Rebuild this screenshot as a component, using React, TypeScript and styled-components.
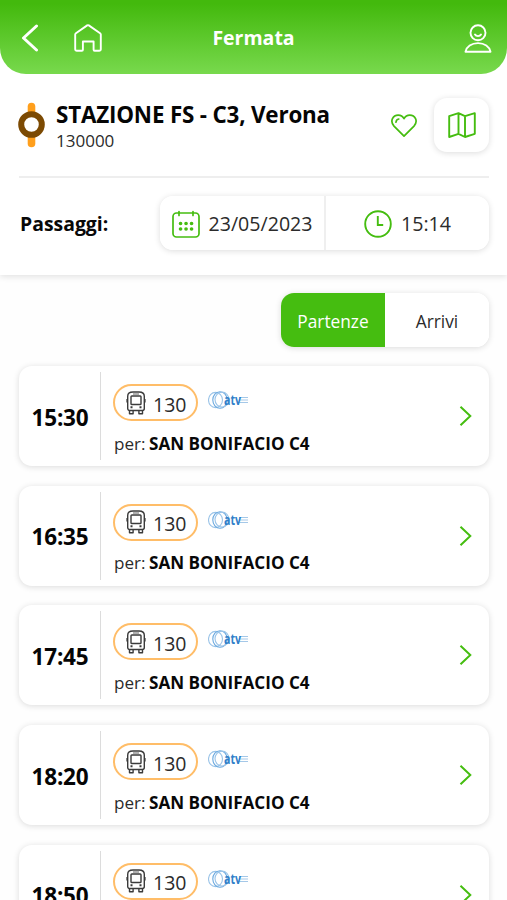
import React from 'react';
import styled, { createGlobalStyle } from 'styled-components';

const GREEN = '#45bd10';

const GlobalStyle = createGlobalStyle`
  * { box-sizing: border-box; }
  html, body { margin: 0; height: 100%; overflow: hidden; background: #fefefe; }
  body { font-family: 'Open Sans', 'Noto Sans', sans-serif; color: #2b2b2b; }
  button { font: inherit; color: inherit; border: 0; padding: 0; background: none; }
  svg { display: block; flex: none; }
`;

const Screen = styled.div`
  width: 100%;
  height: 900px;
  overflow: hidden;
`;

const Top = styled.div`
  height: 275px;
  background: #fff;
  box-shadow: 0 2px 6px rgba(0, 0, 0, 0.11);
`;

const Header = styled.header`
  height: 74px;
  display: grid;
  grid-template-columns: 1fr auto 1fr;
  align-items: center;
  padding: 2px 15px 0 20px;
  border-radius: 0 0 26px 26px;
  background: linear-gradient(#43b90d 5%, #78d94d);
  color: #fff;
`;

const HeaderGroup = styled.div<{ $end?: boolean }>`
  display: flex;
  align-items: center;
  gap: 34px;
  justify-content: ${(p) => (p.$end ? 'flex-end' : 'flex-start')};
`;

const Title = styled.h1`
  margin: 0;
  padding-right: 5px;
  font-size: 19.5px;
  line-height: 28px;
  font-weight: 700;
`;

const Stop = styled.section`
  height: 104px;
  margin: 0 18px 0 19px;
  display: flex;
  align-items: center;
  border-bottom: 2px solid #eee;
`;

const StopMarker = styled.div`
  width: 26px;
  display: flex;
  justify-content: center;
`;

const StopText = styled.div`
  flex: 1;
  margin: 4px 0 0 11px;
`;

const StopName = styled.div`
  font-size: 22.4px;
  line-height: 28px;
  font-weight: 700;
  letter-spacing: -0.18px;
  color: #050505;
  white-space: nowrap;
`;

const StopCode = styled.div`
  font-size: 17px;
  line-height: 24px;
`;

const MapButton = styled.button`
  width: 55px;
  height: 54px;
  margin-left: 17px;
  display: grid;
  place-items: center;
  border-radius: 13px;
  background: #fff;
  box-shadow: 0 1px 6px rgba(0, 0, 0, 0.14);
`;

const Filters = styled.section`
  height: 90px;
  padding: 0 18px 0 20px;
  display: flex;
  align-items: center;
  justify-content: space-between;
`;

const Label = styled.span`
  font-size: 19.4px;
  font-weight: 700;
  color: #080808;
`;

const Segments = styled.div`
  display: flex;
  height: 54px;
  border-radius: 13px;
  overflow: hidden;
  background: #fff;
`;

const Shadow = styled.div`
  border-radius: 13px;
  box-shadow: 0 1px 6px rgba(0, 0, 0, 0.14);
`;

const Picker = styled.button<{ $width: number; $divided?: boolean }>`
  width: ${(p) => p.$width}px;
  display: flex;
  align-items: center;
  justify-content: center;
  gap: 9px;
  padding-top: 1px;
  font-size: 19.6px;
  border-right: ${(p) => (p.$divided ? '2px solid #efefef' : '0')};
`;

const Tabs = styled.div`
  display: flex;
  justify-content: flex-end;
  padding: 18px 18px 19px 0;
`;

const Tab = styled.button<{ $active?: boolean }>`
  width: 104px;
  padding-top: 2px;
  font-size: 17.3px;
  color: ${(p) => (p.$active ? '#fff' : '#2b2b2b')};
  background: ${(p) => (p.$active ? GREEN : '#fff')};
`;

const List = styled.main`
  display: grid;
  gap: 19.7px;
  padding: 0 18px 0 19px;
`;

const Card = styled.article`
  height: 100px;
  padding: 6px 16px 6px 0;
  display: flex;
  border-radius: 13px;
  background: #fff;
  box-shadow: 0 1px 6px rgba(0, 0, 0, 0.14);
`;

const Time = styled.div`
  width: 82px;
  display: flex;
  align-items: center;
  justify-content: center;
  border-right: 1px solid #dcdcdc;
  padding: 2px 0 0 1px;
  font-size: 22.5px;
  letter-spacing: -0.2px;
  font-weight: 700;
  color: #050505;
`;

const Details = styled.div`
  flex: 1;
  padding: 12px 0 0 12px;
`;

const LineRow = styled.div`
  display: flex;
  height: 37px;
  gap: 10px;
`;

const Pill = styled.div`
  width: 85px;
  height: 37px;
  display: flex;
  align-items: center;
  gap: 7px;
  padding-left: 11px;
  border: 2px solid #ffbd68;
  border-radius: 19px;
  font-size: 19.5px;
`;

const PillNumber = styled.span`
  padding-top: 3px;
`;

const LogoSlot = styled.div`
  padding-top: 5px;
`;

const Destination = styled.div`
  margin-top: 10.5px;
  padding-left: 1px;
  font-size: 17.1px;
  line-height: 24px;
  white-space: nowrap;
`;

const Place = styled.strong`
  margin-left: -1px;
  font-weight: 700;
  color: #080808;
`;

const Arrow = styled.div`
  display: flex;
  align-items: center;
`;

const BackIcon = () => (
  <svg width="20" height="28" viewBox="0 0 20 28" fill="none" stroke="#fff" strokeWidth="3" strokeLinecap="round" strokeLinejoin="round">
    <path d="M16.500 2 3.500 14l13 12" />
  </svg>
);

const HomeIcon = () => (
  <svg width="28" height="28" viewBox="0 0 28 28" fill="none" stroke="#fff" strokeWidth="1.900" strokeLinejoin="round">
    <path d="M1.200 10.500Q1.200 9.800 1.900 9.300L13.200 1.400Q14 .9 14.800 1.400L26.100 9.300Q26.800 9.800 26.800 10.500V25.200a1.600 1.600 0 0 1-1.600 1.600h-4.600a1 1 0 0 1-1-1v-8.300H8.900v8.300a1 1 0 0 1-1 1H2.800a1.600 1.600 0 0 1-1.600-1.600z" />
  </svg>
);

const UserIcon = () => (
  <svg width="28" height="29" viewBox="0 0 28 29" fill="none" stroke="#fff" strokeWidth="1.900" strokeLinejoin="round" strokeLinecap="round">
    <circle cx="14" cy="8.800" r="7.500" />
    <path d="M11 10.600c1.200 2 4.800 2 6 0M1.500 27.700c1-5 6-8.600 12.500-8.600s11.500 3.600 12.500 8.600z" />
  </svg>
);

const StopIcon = () => (
  <svg width="28" height="46" viewBox="0 0 28 46" fill="none">
    <path d="M13.500 4.500v37" stroke="#ff9f1c" strokeWidth="7.600" strokeLinecap="round" />
    <circle cx="13.500" cy="22.500" r="10.300" fill="#fff" stroke="#7c4a03" strokeWidth="6" />
  </svg>
);

const HeartIcon = () => (
  <svg width="26" height="24" viewBox="0 0 26 24" fill="none" stroke={GREEN} strokeWidth="1.700" strokeLinejoin="round" strokeLinecap="round">
    <path d="M13 23.200 3 13.100C-1.500 8.100 2 2.100 7.200 2.100c2.600 0 4.600 1.300 5.800 3.600 1.200-2.300 3.200-3.600 5.800-3.600C24 2.100 27.500 8.100 23 13.100z" />
    <path d="M5 9.200c.1-1.700 1.100-2.900 2.800-3.200" />
  </svg>
);

const MapIcon = () => (
  <svg width="28" height="26" viewBox="0 0 28 26" fill="none" stroke={GREEN} strokeWidth="1.900" strokeLinejoin="round">
    <path d="M1.200 4.200 10.500 1.200l6.500 3L26.800 1.200v20.600L17 25l-6.500-3.200L1.200 25zM10.500 1.200v20.600M17 4.200V25" />
  </svg>
);

const CalendarIcon = () => (
  <svg width="28" height="28" viewBox="0 0 28 28" fill="none" stroke={GREEN} strokeWidth="1.700" strokeLinecap="round">
    <rect x="1" y="3" width="26" height="24" rx="3.500" />
    <path d="M7 1.500v4M21 1.500v4" />
    <path d="M8.500 13.500h.1M14 13.500h.1M19.500 13.500h.1M8.500 19h.1M14 19h.1M19.500 19h.1" strokeWidth="3.600" />
  </svg>
);

const ClockIcon = () => (
  <svg width="28" height="28" viewBox="0 0 28 28" fill="none" stroke={GREEN} strokeWidth="1.900">
    <circle cx="14" cy="14" r="12.800" />
    <path d="M13.800 6v9h5.400" />
  </svg>
);

const BusIcon = () => (
  <svg width="20" height="24" viewBox="0 0 20 24" fill="none" stroke="#3b3b3b" strokeWidth="1.400" strokeLinejoin="round">
    <path d="M1.700 17.500V5.200C1.700 2 4 1 7 1h6c3 0 5.300 1 5.300 4.200v12.300a2 2 0 0 1-2 2H3.700a2 2 0 0 1-2-2z" />
    <path d="M.9 8v3.500M19.100 8v3.500" strokeWidth="1" />
    <rect x="5" y="5" width="10" height="8.500" rx=".8" />
    <path d="M7 3h6" strokeWidth=".8" />
    <path d="M3.500 19.500v3.300h3.600v-3.300M12.900 19.500v3.300h3.600v-3.300" />
    <path d="M4.500 16.300h2M13.500 16.300h2" strokeWidth="2" />
  </svg>
);

const LogoWord = styled.text`
  font: 700 14.5px 'Open Sans', sans-serif;
`;

const AtvLogo = () => (
  <svg width="42" height="24" viewBox="0 0 42 24" fill="none">
    <g stroke="#9bc4e8" strokeWidth="1.100">
      <ellipse cx="7.500" cy="11" rx="7" ry="7.600" />
      <ellipse cx="12" cy="11" rx="7.200" ry="8.200" stroke="#69a8df" />
      <ellipse cx="14" cy="10.600" rx="7" ry="7.500" />
    </g>
    <path d="M31 8.500h9M31 11h9M30 13.500h10" stroke="#a5c8e8" />
    <LogoWord x="16" y="15.500" fill="#307fc9" textLength="17" lengthAdjust="spacingAndGlyphs">atv</LogoWord>
  </svg>
);

const ChevronIcon = () => (
  <svg width="14" height="22" viewBox="0 0 14 22" fill="none" stroke={GREEN} strokeWidth="2">
    <path d="m1.500 1.700 9.800 9.300-9.800 9.300" />
  </svg>
);

const departures = ['15:30', '16:35', '17:45', '18:20', '18:50'];

const Departure = ({ time }: { time: string }) => (
  <Card>
    <Time>{time}</Time>
    <Details>
      <LineRow>
        <Pill><BusIcon /><PillNumber>130</PillNumber></Pill>
        <LogoSlot><AtvLogo /></LogoSlot>
      </LineRow>
      <Destination>per: <Place>SAN BONIFACIO C4</Place></Destination>
    </Details>
    <Arrow><ChevronIcon /></Arrow>
  </Card>
);

export default function App() {
  return (
    <>
      <GlobalStyle />
      <Screen>
        <Top>
          <Header>
            <HeaderGroup><BackIcon /><HomeIcon /></HeaderGroup>
            <Title>Fermata</Title>
            <HeaderGroup $end><UserIcon /></HeaderGroup>
          </Header>
          <Stop>
            <StopMarker><StopIcon /></StopMarker>
            <StopText>
              <StopName>STAZIONE FS - C3, Verona</StopName>
              <StopCode>130000</StopCode>
            </StopText>
            <HeartIcon />
            <MapButton aria-label="Mappa"><MapIcon /></MapButton>
          </Stop>
          <Filters>
            <Label>Passaggi:</Label>
            <Shadow>
              <Segments>
                <Picker $width={166} $divided><CalendarIcon />23/05/2023</Picker>
                <Picker $width={163}><ClockIcon />15:14</Picker>
              </Segments>
            </Shadow>
          </Filters>
        </Top>
        <Tabs>
          <Shadow>
            <Segments>
              <Tab $active>Partenze</Tab>
              <Tab>Arrivi</Tab>
            </Segments>
          </Shadow>
        </Tabs>
        <List>
          {departures.map((time) => <Departure key={time} time={time} />)}
        </List>
      </Screen>
    </>
  );
}
